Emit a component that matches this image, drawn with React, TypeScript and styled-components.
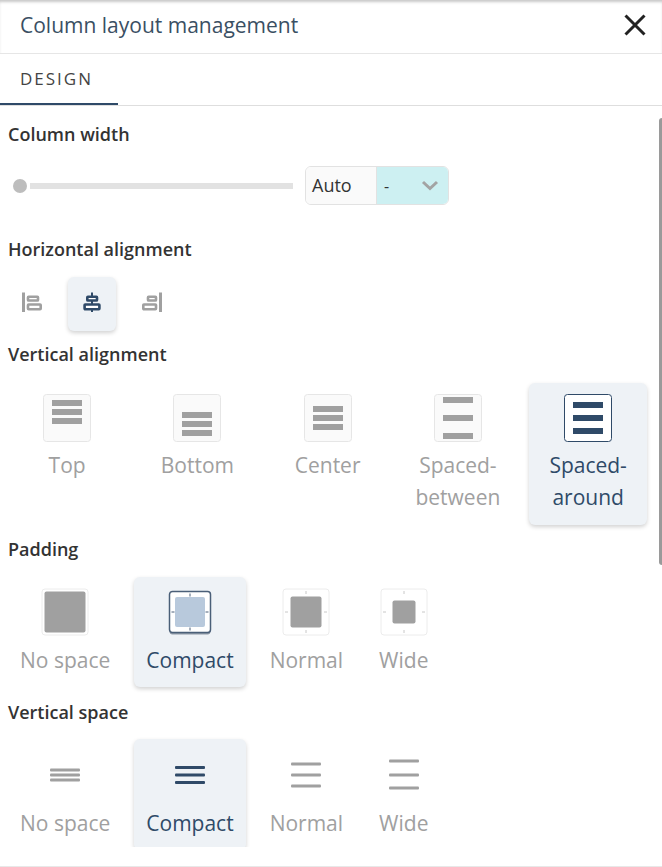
import React from 'react';
import styled, { createGlobalStyle } from 'styled-components';

const navy = '#2f4a68';
const grey = '#a0a0a0';

const GlobalStyle = createGlobalStyle`
  html, body {
    margin: 0;
    padding: 0;
    background: #fff;
    font-family: "Open Sans", "Noto Sans", sans-serif;
  }
`;

const Panel = styled.div`
  position: relative;
  width: 662px;
  height: 867px;
  overflow: hidden;
  display: flex;
  flex-direction: column;
  background: #fff;
  box-sizing: border-box;
  border-bottom: 1px solid #e8e8e8;
`;

const Header = styled.header`
  flex: none;
  height: 54px;
  box-sizing: border-box;
  display: flex;
  align-items: center;
  justify-content: space-between;
  padding: 0 16px 4px 20px;
  border-bottom: 1px solid #e6e6e6;
  box-shadow: inset 0 3px 3px -1px rgba(0, 0, 0, 0.22);
`;

const Title = styled.h1`
  margin: 0;
  font-size: 21px;
  font-weight: 400;
  color: #3a4f63;
`;

const CloseButton = styled.button`
  border: 0;
  padding: 0;
  background: none;
  display: flex;
  width: 22px;
  height: 22px;
`;

const TabBar = styled.nav`
  flex: none;
  height: 52px;
  box-sizing: border-box;
  display: flex;
  border-bottom: 1px solid #dedede;
`;

const Tab = styled.div`
  width: 118px;
  height: 51px;
  box-sizing: border-box;
  padding-left: 20px;
  display: flex;
  align-items: center;
  font-size: 17px;
  letter-spacing: 2px;
  color: #444;
  border-bottom: 2px solid ${navy};
`;

const Content = styled.main`
  flex: none;
  height: 741px;
  overflow: hidden;
  padding: 16px 0 0 8px;
  box-sizing: border-box;
`;

const Scrollbar = styled.div`
  position: absolute;
  top: 118px;
  right: 0;
  width: 3px;
  height: 447px;
  border-radius: 3px 0 0 3px;
  background: #9a9a9a;
`;

const Label = styled.div<{ $top?: number; $bottom: number }>`
  height: 24px;
  line-height: 24px;
  font-size: 18px;
  font-weight: 600;
  color: #333;
  margin-top: ${(p) => p.$top ?? 0}px;
  margin-bottom: ${(p) => p.$bottom}px;
`;

const SliderRow = styled.div`
  display: flex;
  align-items: center;
  height: 39px;
`;

const Thumb = styled.span`
  width: 14px;
  height: 14px;
  margin-left: 5px;
  border-radius: 50%;
  background: #bdbdbd;
  flex: none;
`;

const Track = styled.span`
  width: 263px;
  height: 6px;
  margin-left: 3px;
  background: #e2e2e2;
  flex: none;
`;

const UnitField = styled.div`
  display: flex;
  width: 144px;
  height: 39px;
  margin-left: 12px;
  box-sizing: border-box;
  border: 1px solid #e2e2e2;
  border-radius: 6px;
  overflow: hidden;
  font-size: 18px;
  color: #333;
`;

const UnitValue = styled.div`
  width: 71px;
  box-sizing: border-box;
  padding: 0 0 2px 6px;
  display: flex;
  align-items: center;
  background: #fafafa;
  border-right: 1px solid #e2e2e2;
`;

const UnitSelect = styled.div`
  flex: 1;
  display: flex;
  align-items: center;
  justify-content: space-between;
  padding: 0 9px 0 7px;
  font-size: 16px;
  background: #cdf0f2;
`;

const AlignRow = styled.div`
  display: flex;
  gap: 12px;
`;

const AlignButton = styled.div<{ $active?: boolean }>`
  width: 48px;
  height: 54px;
  box-sizing: border-box;
  padding-bottom: 5px;
  display: flex;
  align-items: center;
  justify-content: center;
  border-radius: 6px;
  background: ${(p) => (p.$active ? '#eef2f6' : 'transparent')};
  box-shadow: ${(p) => (p.$active ? '0 2px 4px rgba(0, 0, 0, 0.18)' : 'none')};
`;

const OptionGrid = styled.div`
  display: grid;
  grid-template-columns: repeat(5, 118.25px);
  gap: 12px;
  align-items: start;
`;

const OptionRow = styled.div`
  display: flex;
  gap: 12px;
  align-items: flex-start;
`;

const Option = styled.div<{ $active?: boolean }>`
  display: flex;
  flex-direction: column;
  align-items: center;
  gap: 8px;
  padding: 11px 12px;
  border-radius: 6px;
  text-align: center;
  background: ${(p) => (p.$active ? '#eef2f6' : 'transparent')};
  box-shadow: ${(p) => (p.$active ? '0 2px 4px rgba(0, 0, 0, 0.18)' : 'none')};
  color: ${(p) => (p.$active ? navy : grey)};
`;

const GridOption = styled(Option)`
  gap: 7px;
  padding-bottom: 12px;
`;

const SpaceOption = styled(Option)`
  padding-top: 12px;
`;

const OptionText = styled.span`
  font-size: 21px;
  line-height: 32px;
  white-space: pre-line;
`;

const CloseIcon = () => (
  <svg width="22" height="22" viewBox="0 0 22 22">
    <path d="M1.5 1.5 L20.5 20.5 M20.5 1.5 L1.5 20.5" stroke="#222" strokeWidth="3" fill="none" />
  </svg>
);

const Chevron = () => (
  <svg width="18" height="11" viewBox="0 0 18 11">
    <path d="M2 2 L9 8.5 L16 2" stroke="#a3a3a3" strokeWidth="3" fill="none" />
  </svg>
);

// outer x extents of the bar and of the two blocks, in the 24px icon box
const alignShapes = {
  left: { bar: [2, 5], top: [6.7, 19.3], bottom: [6.7, 22] },
  center: { bar: [11, 13], top: [6, 18.3], bottom: [3.3, 20.7] },
  right: { bar: [19, 22], top: [6.7, 17.3], bottom: [2, 17.3] },
};

const AlignIcon = ({ side, color }: { side: keyof typeof alignShapes; color: string }) => {
  const { bar, top, bottom } = alignShapes[side];
  return (
    <svg width="24" height="24" viewBox="0 0 24 24">
      <rect x={bar[0]} y="2.5" width={bar[1] - bar[0]} height="19.5" fill={color} />
      <rect x={top[0] + 1.3} y="6.8" width={top[1] - top[0] - 2.6} height="3.7" rx="0.6" fill="#fff" stroke={color} strokeWidth="2.6" />
      <rect x={bottom[0] + 1.3} y="14.5" width={bottom[1] - bottom[0] - 2.6} height="4.7" rx="0.6" fill="#fff" stroke={color} strokeWidth="2.6" />
    </svg>
  );
};

const BarsIcon = ({ rows, active }: { rows: number[]; active?: boolean }) => (
  <svg width="48" height="48" viewBox="0 0 48 48">
    <rect
      x="0.5"
      y="0.5"
      width="47"
      height="47"
      rx="3"
      fill={active ? '#fff' : '#fafafa'}
      stroke={active ? navy : '#e6e6e6'}
    />
    {rows.map((y) => (
      <rect key={y} x="9" y={y} width="30" height="6" fill={active ? navy : '#a0a0a0'} />
    ))}
  </svg>
);

const PaddingIcon = ({ inner, active }: { inner: number; active?: boolean }) => {
  const start = 24 - inner / 2;
  const tick = active ? '#4a5f78' : '#c8c8c8';
  const edge = active ? 3.5 : 1;
  const size = 48 - edge * 2;
  const end = edge + size;
  return (
    <svg width="48" height="48" viewBox="0 0 48 48">
      {active && <rect x={edge} y={edge + 2} width={size} height={size} rx="3" fill="#8d98a6" />}
      <rect
        x={edge}
        y={edge}
        width={size}
        height={size}
        rx="3"
        fill="#fff"
        stroke={active ? '#4a5f78' : '#ececec'}
        strokeWidth={active ? 1.5 : 1}
      />
      {start - edge > 3 && (
        <path
          d={`M24 ${edge + 2}v3 M24 ${end - 2}v-3 M${edge + 2} 24h3 M${end - 2} 24h-3`}
          stroke={tick}
          fill="none"
        />
      )}
      <rect x={start} y={start} width={inner} height={inner} rx="2" fill={active ? '#b8c9dc' : '#a0a0a0'} />
    </svg>
  );
};

const LinesIcon = ({ rows, active }: { rows: number[]; active?: boolean }) => (
  <svg width="48" height="48" viewBox="0 0 48 48">
    {rows.map((y) => (
      <rect key={y} x="9" y={y - 1.5} width="30" height="3" rx="1" fill={active ? navy : '#a0a0a0'} />
    ))}
  </svg>
);

const verticalAlignments = [
  { name: 'Top', rows: [6, 15, 24] },
  { name: 'Bottom', rows: [18, 27, 36] },
  { name: 'Center', rows: [12, 21, 30] },
  { name: 'Spaced-\nbetween', rows: [3, 21, 39] },
  { name: 'Spaced-\naround', rows: [8, 21, 34], active: true },
];

const paddings = [
  { name: 'No space', inner: 41 },
  { name: 'Compact', inner: 30, active: true },
  { name: 'Normal', inner: 31 },
  { name: 'Wide', inner: 23 },
];

const verticalSpaces = [
  { name: 'No space', rows: [19, 24, 29] },
  { name: 'Compact', rows: [16.5, 24, 31.5], active: true },
  { name: 'Normal', rows: [13, 24, 35] },
  { name: 'Wide', rows: [10, 24, 37] },
];

export default function App() {
  return (
    <Panel>
      <GlobalStyle />
      <Header>
        <Title>Column layout management</Title>
        <CloseButton aria-label="Close">
          <CloseIcon />
        </CloseButton>
      </Header>
      <TabBar>
        <Tab>DESIGN</Tab>
      </TabBar>
      <Content>
        <Label $bottom={20}>Column width</Label>
        <SliderRow>
          <Thumb />
          <Track />
          <UnitField>
            <UnitValue>Auto</UnitValue>
            <UnitSelect>
              -
              <Chevron />
            </UnitSelect>
          </UnitField>
        </SliderRow>

        <Label $top={32} $bottom={16}>Horizontal alignment</Label>
        <AlignRow>
          <AlignButton>
            <AlignIcon side="left" color={grey} />
          </AlignButton>
          <AlignButton $active>
            <AlignIcon side="center" color={navy} />
          </AlignButton>
          <AlignButton>
            <AlignIcon side="right" color={grey} />
          </AlignButton>
        </AlignRow>

        <Label $top={11} $bottom={17}>Vertical alignment</Label>
        <OptionGrid>
          {verticalAlignments.map((item) => (
            <GridOption key={item.name} $active={item.active}>
              <BarsIcon rows={item.rows} active={item.active} />
              <OptionText>{item.name}</OptionText>
            </GridOption>
          ))}
        </OptionGrid>

        <Label $top={12} $bottom={16}>Padding</Label>
        <OptionRow>
          {paddings.map((item) => (
            <Option key={item.name} $active={item.active}>
              <PaddingIcon inner={item.inner} active={item.active} />
              <OptionText>{item.name}</OptionText>
            </Option>
          ))}
        </OptionRow>

        <Label $top={13} $bottom={15}>Vertical space</Label>
        <OptionRow>
          {verticalSpaces.map((item) => (
            <SpaceOption key={item.name} $active={item.active}>
              <LinesIcon rows={item.rows} active={item.active} />
              <OptionText>{item.name}</OptionText>
            </SpaceOption>
          ))}
        </OptionRow>
      </Content>
      <Scrollbar />
    </Panel>
  );
}
